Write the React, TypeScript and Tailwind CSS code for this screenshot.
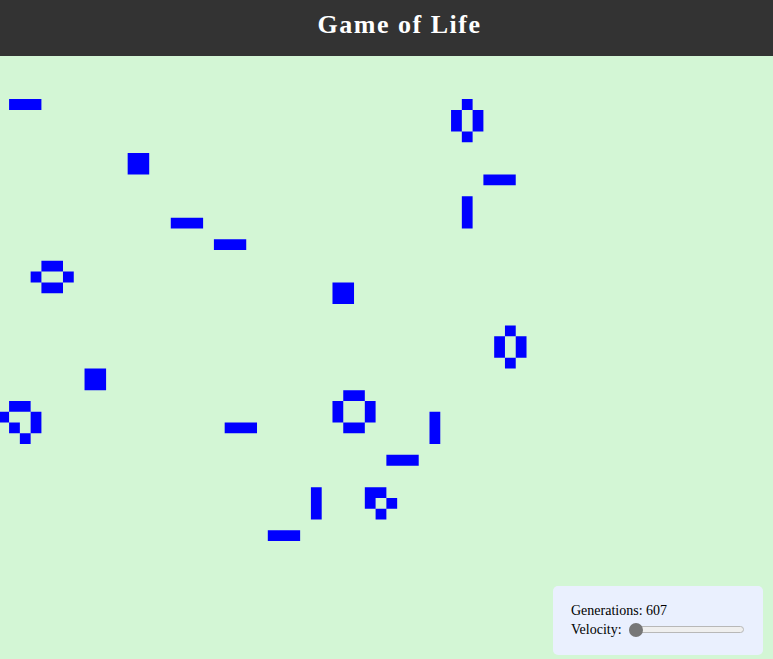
import React from 'react';

// live cells as [col, row] on a grid of ~10.78px squares
const CELLS: [number, number][] = [
  // blinkers
  [1, 4], [2, 4], [3, 4],
  [45, 11], [46, 11], [47, 11],
  [43, 13], [43, 14], [43, 15],
  [16, 15], [17, 15], [18, 15],
  [20, 17], [21, 17], [22, 17],
  [21, 34], [22, 34], [23, 34],
  [40, 33], [40, 34], [40, 35],
  [36, 37], [37, 37], [38, 37],
  [29, 40], [29, 41], [29, 42],
  [25, 44], [26, 44], [27, 44],
  // blocks
  [12, 9], [13, 9], [12, 10], [13, 10],
  [31, 21], [32, 21], [31, 22], [32, 22],
  [8, 29], [9, 29], [8, 30], [9, 30],
  // beehives
  [43, 4], [42, 5], [44, 5], [42, 6], [44, 6], [43, 7],
  [4, 19], [5, 19], [3, 20], [6, 20], [4, 21], [5, 21],
  [47, 25], [46, 26], [48, 26], [46, 27], [48, 27], [47, 28],
  // loaf
  [1, 32], [2, 32], [0, 33], [3, 33], [1, 34], [3, 34], [2, 35],
  // pond
  [32, 31], [33, 31], [31, 32], [34, 32], [31, 33], [34, 33], [32, 34], [33, 34],
  // boat
  [34, 40], [35, 40], [34, 41], [36, 41], [35, 42],
];

const CELL = 10.78;

// one path so neighbouring cells don't show seams
const cellPath = CELLS.map(([c, r]) => `M${c} ${r}h1v1h-1z`).join('');

const Board = () => (
  <svg
    width={773}
    height={603}
    viewBox={`0.158 0 ${773 / CELL} ${603 / CELL}`}
    preserveAspectRatio="none"
    className="block"
  >
    <path d={cellPath} fill="#0000ff" />
  </svg>
);

const Slider = () => (
  <div className="relative ml-[7px] flex h-[14px] w-[115px] items-center">
    <div className="h-[7px] w-full rounded-full border border-[#b8b8b8] bg-[#efefef]"></div>
    <div className="absolute left-0 top-0 h-[14px] w-[14px] rounded-full bg-[#777777]"></div>
  </div>
);

export default function App() {
  return (
    <div className="flex h-screen flex-col overflow-hidden bg-[#d3f6d5] font-['Liberation_Serif',serif]">
      <header className="flex h-14 shrink-0 items-center justify-center bg-[#333333] pb-[8px] pl-[26px]">
        <h1 className="text-[26px] font-bold tracking-[1.5px] text-white">Game of Life</h1>
      </header>

      <main className="relative flex-1 overflow-hidden">
        <Board />

        <div className="absolute bottom-[4px] right-[10px] w-[210px] rounded-[5px] bg-[#eaf0fe] px-[18px] pb-[16px] pt-[15px] text-[14px] leading-[19px] text-black">
          <div>Generations: 607</div>
          <div className="flex items-center">
            <span>Velocity:</span>
            <Slider />
          </div>
        </div>
      </main>
    </div>
  );
}
